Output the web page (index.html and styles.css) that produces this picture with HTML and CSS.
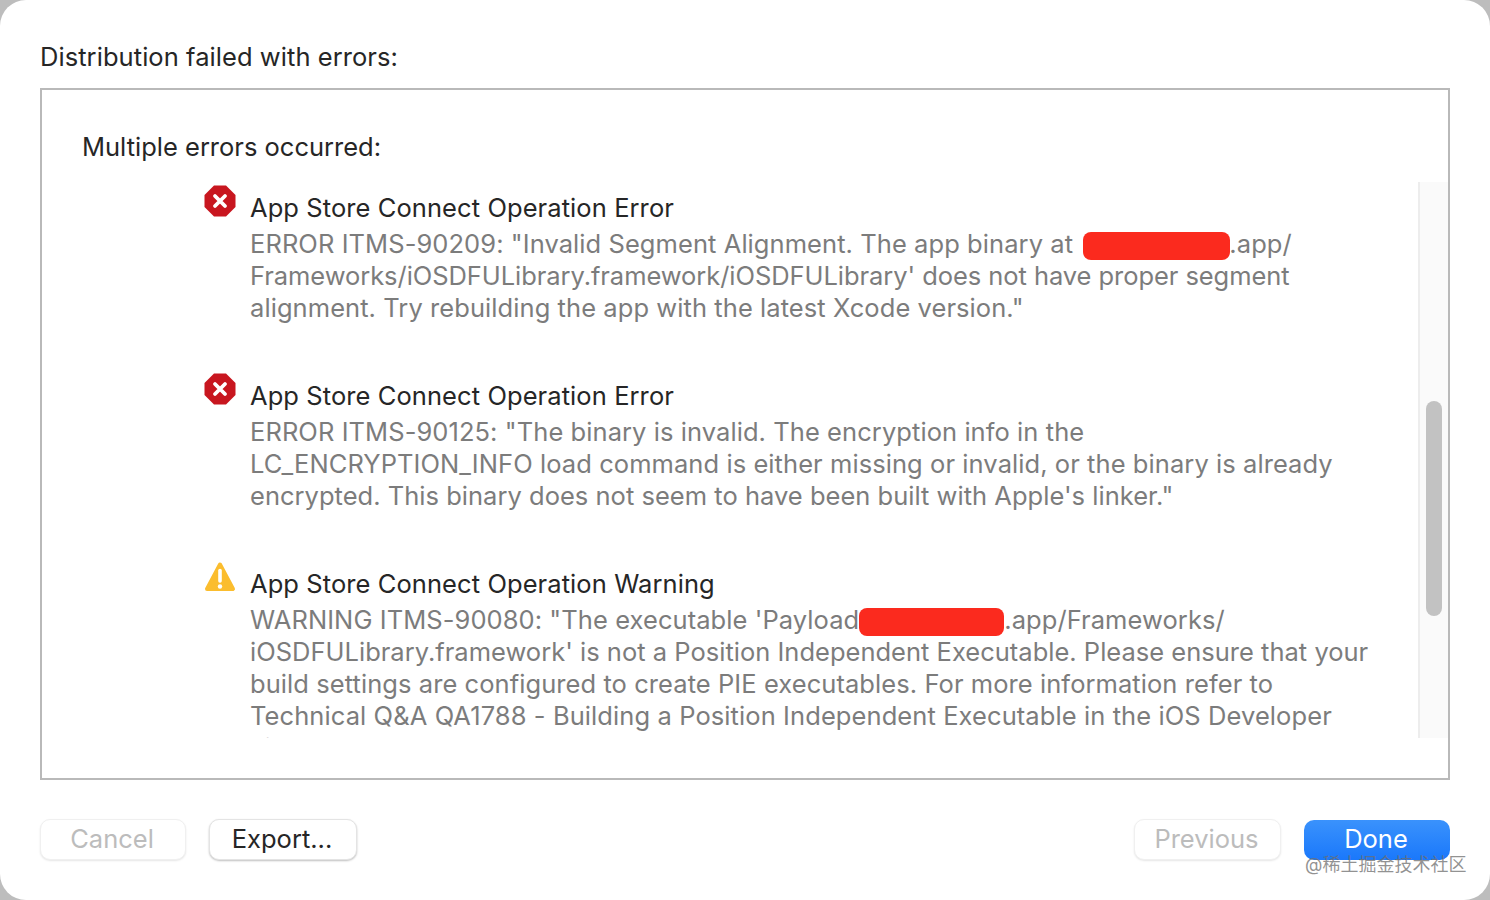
FILE: index.html
```html
<!DOCTYPE html>
<html lang="en">

<head>
    <meta charset="UTF-8">
    <title>Distribution failed</title>
    <link rel="stylesheet" href="styles.css">
</head>

<body>
    <div class="dialog">
        <h1 class="title">Distribution failed with errors:</h1>
        <div class="panel">
            <p class="panel-title">Multiple errors occurred:</p>
            <div class="scroller">
                <div class="list">
                    <div class="item">
                        <svg class="icon" viewBox="0 0 32 32">
                            <polygon points="10,0.5 22,0.5 31.5,10 31.5,22 22,31.5 10,31.5 0.5,22 0.5,10" fill="#c8161f" />
                            <path d="M11 11 L21 21 M21 11 L11 21" stroke="#fff" stroke-width="3.8" stroke-linecap="round" />
                        </svg>
                        <div class="message">
                            <div class="heading">App Store Connect Operation Error</div>
                            <div class="line">ERROR ITMS-90209: "Invalid Segment Alignment. The app binary at <span class="redact redact-a"></span>.app/</div>
                            <div class="line line-tight">Frameworks/iOSDFULibrary.framework/iOSDFULibrary' does not have proper segment</div>
                            <div class="line">alignment. Try rebuilding the app with the latest Xcode version."</div>
                        </div>
                    </div>
                    <div class="item">
                        <svg class="icon" viewBox="0 0 32 32">
                            <polygon points="10,0.5 22,0.5 31.5,10 31.5,22 22,31.5 10,31.5 0.5,22 0.5,10" fill="#c8161f" />
                            <path d="M11 11 L21 21 M21 11 L11 21" stroke="#fff" stroke-width="3.8" stroke-linecap="round" />
                        </svg>
                        <div class="message">
                            <div class="heading">App Store Connect Operation Error</div>
                            <div class="line">ERROR ITMS-90125: "The binary is invalid. The encryption info in the</div>
                            <div class="line">LC_ENCRYPTION_INFO load command is either missing or invalid, or the binary is already</div>
                            <div class="line line-short">encrypted. This binary does not seem to have been built with Apple's linker."</div>
                        </div>
                    </div>
                    <div class="item">
                        <svg class="icon" viewBox="0 0 32 32">
                            <path d="M16 3.5 L29 28 H3 Z" fill="#fbbd2e" stroke="#fbbd2e" stroke-width="4" stroke-linejoin="round" />
                            <path d="M16 9.5 V20" stroke="#fff" stroke-width="3.6" stroke-linecap="round" />
                            <circle cx="16" cy="25.5" r="2.2" fill="#fff" />
                        </svg>
                        <div class="message">
                            <div class="heading">App Store Connect Operation Warning</div>
                            <div class="line">WARNING ITMS-90080: "The executable 'Payload<span class="redact redact-b"></span>.app/Frameworks/</div>
                            <div class="line line-plain">iOSDFULibrary.framework' is not a Position Independent Executable. Please ensure that your</div>
                            <div class="line">build settings are configured to create PIE executables. For more information refer to</div>
                            <div class="line line-wide">Technical Q&amp;A QA1788 - Building a Position Independent Executable in the iOS Developer</div>
                            <div class="line">Library."</div>
                        </div>
                    </div>
                </div>
                <div class="scrollbar">
                    <div class="thumb"></div>
                </div>
            </div>
        </div>
        <div class="footer">
            <div class="footer-group">
                <button class="btn btn-cancel" disabled>Cancel</button>
                <button class="btn btn-export">Export...</button>
            </div>
            <div class="footer-group">
                <button class="btn btn-previous" disabled>Previous</button>
                <button class="btn btn-primary">Done</button>
            </div>
        </div>
        <div class="watermark">@稀土掘金技术社区</div>
    </div>
</body>

</html>
```

FILE: styles.css
```css
html,
body {
    margin: 0;
    height: 100%;
}

body {
    background-color: #bdbdbd;
    font-family: Inter, "Noto Sans CJK SC", sans-serif;
    overflow: hidden;
}

.dialog {
    position: relative;
    height: 900px;
    padding: 0 40px;
    box-sizing: border-box;
    background-color: #fff;
    border-radius: 26px;
    display: flex;
    flex-direction: column;
}

.title {
    margin: 0;
    height: 88px;
    padding-top: 40px;
    box-sizing: border-box;
    font-size: 25.5px;
    line-height: 34px;
    font-weight: 400;
    letter-spacing: 0.06px;
    color: #262626;
}

.panel {
    height: 692px;
    box-sizing: border-box;
    border: 2px solid #b9b9b9;
    padding-top: 40px;
}

.panel-title {
    margin: 0 0 0 40px;
    height: 52px;
    font-size: 25.5px;
    line-height: 34px;
    color: #262626;
}

.scroller {
    height: 556px;
    display: flex;
    overflow: hidden;
}

.list {
    flex: 1;
    padding-left: 162px;
    overflow: hidden;
}

.item {
    display: flex;
    gap: 14px;
    height: 188px;
}

.item:last-child {
    height: auto;
}

.icon {
    width: 32px;
    height: 32px;
    margin-top: 3px;
    flex-shrink: 0;
}

.message {
    white-space: nowrap;
}

.heading {
    height: 38px;
    padding-top: 8px;
    font-size: 25.5px;
    line-height: 36px;
    letter-spacing: 0.08px;
    color: #262626;
}

.line {
    font-size: 25.5px;
    line-height: 32px;
    letter-spacing: 0.07px;
    color: #7c7c7c;
}

.line-tight {
    letter-spacing: -0.06px;
}

.line-plain {
    letter-spacing: 0.01px;
}

.line-short {
    letter-spacing: 0.02px;
}

.line-wide {
    letter-spacing: 0.09px;
}

.redact {
    display: inline-block;
    height: 28px;
    vertical-align: -7px;
    background-color: #fb2a1e;
    border-radius: 8px;
}

.redact-a {
    width: 147px;
    margin-left: 3px;
    margin-right: -1px;
}

.redact-b {
    width: 145px;
}

.scrollbar {
    width: 30px;
    box-sizing: border-box;
    background-color: #fafafa;
    border-left: 2px solid #ededed;
    padding-top: 219px;
    padding-left: 6px;
}

.thumb {
    width: 16px;
    height: 215px;
    background-color: #c2c2c2;
    border-radius: 8px;
}

.footer {
    display: flex;
    justify-content: space-between;
    align-items: flex-end;
    margin-top: 39px;
}

.footer-group {
    display: flex;
    align-items: flex-end;
    gap: 23px;
}

.btn {
    height: 41px;
    padding: 0 2px 3px 0;
    font-family: inherit;
    font-size: 25.5px;
    color: #262626;
    background-color: #fff;
    border: 1px solid #e4e4e4;
    border-radius: 10px;
    box-shadow: 0 1px 2px rgba(0, 0, 0, 0.25);
}

.btn:disabled {
    color: #bcbcbc;
    border-color: #f0f0f0;
    box-shadow: 0 1px 2px rgba(0, 0, 0, 0.1);
}

.btn-cancel {
    width: 146px;
}

.btn-export {
    width: 148px;
}

.btn-previous {
    width: 147px;
}

.btn-primary {
    width: 146px;
    height: 40px;
    color: #fff;
    background: linear-gradient(#3a92fc, #1a78fb);
    border: none;
    box-shadow: none;
}

.watermark {
    position: absolute;
    left: 1305px;
    top: 853px;
    font-size: 18px;
    line-height: 24px;
    color: rgba(110, 110, 110, 0.75);
    white-space: nowrap;
}
```
